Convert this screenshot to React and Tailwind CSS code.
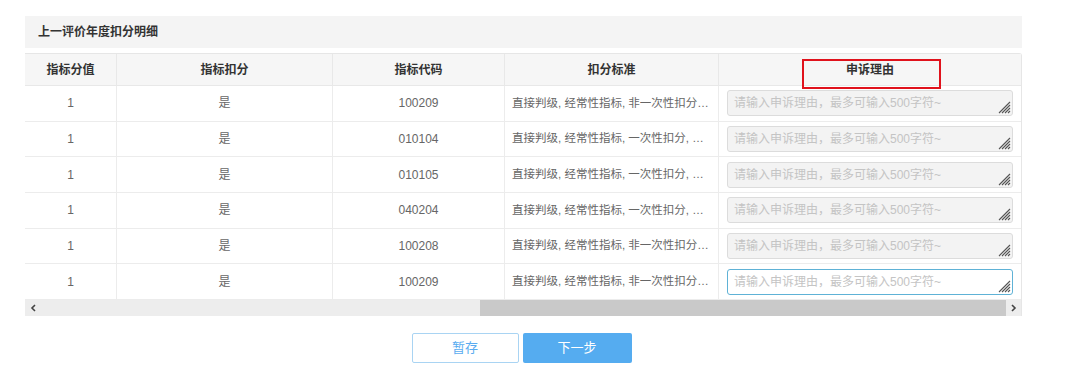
const rows = [
  { score: '1', deduct: '是', code: '100209', rule: '直接判级, 经常性指标, 非一次性扣分, 按次扣分' },
  { score: '1', deduct: '是', code: '010104', rule: '直接判级, 经常性指标, 一次性扣分, 按次扣分' },
  { score: '1', deduct: '是', code: '010105', rule: '直接判级, 经常性指标, 一次性扣分, 按次扣分' },
  { score: '1', deduct: '是', code: '040204', rule: '直接判级, 经常性指标, 一次性扣分, 按次扣分' },
  { score: '1', deduct: '是', code: '100208', rule: '直接判级, 经常性指标, 非一次性扣分, 按次扣分' },
  { score: '1', deduct: '是', code: '100209', rule: '直接判级, 经常性指标, 非一次性扣分, 按次扣分' },
];

const font = { fontFamily: '"Liberation Sans", "Noto Sans CJK SC", sans-serif' };

// 文本框右下角的拖拽纹理
const Grip = () => (
  <svg className="absolute right-[2px] bottom-[2px]" width="13" height="13" viewBox="0 0 13 13">
    <path d="M12 1 L1 12 M12 4 L4 12 M12 7 L7 12 M12 10 L10 12" stroke="#555" strokeWidth="1.1" />
  </svg>
);

export default function App() {
  return (
    <div className="w-[1080px] h-[377px] bg-white pt-4 pl-[25px] text-xs" style={font}>
      <div className="w-[997px]">
        {/* 标题 */}
        <div className="h-8 bg-[#f4f4f4] flex items-center pl-[13px] font-bold text-[#333]">
          上一评价年度扣分明细
        </div>

        {/* 表格 */}
        <div className="mt-[5px] border-t border-r border-[#e6e6e6] rounded-tr-[3px] w-[997px]">
          <div className="flex h-8 bg-[#f6f6f6] border-b border-[#e8e8e8] font-bold text-[#333]">
            <div className="w-[92px] flex items-center justify-center border-r border-[#e8e8e8]">指标分值</div>
            <div className="w-[216px] flex items-center justify-center border-r border-[#e8e8e8]">指标扣分</div>
            <div className="w-[172px] flex items-center justify-center border-r border-[#e8e8e8]">指标代码</div>
            <div className="w-[214px] flex items-center justify-center border-r border-[#e8e8e8]">扣分标准</div>
            <div className="flex-1 flex items-center justify-center relative">
              申诉理由
              <div className="absolute left-[83px] top-[5px] w-[139px] h-[30px] border-2 border-[#e0121c]" />
            </div>
          </div>

          {rows.map((r, i) => (
            <div key={i} className="flex h-[35.7px] border-b border-[#ececec] text-[#666]">
              <div className="w-[92px] flex items-center justify-center border-r border-[#ececec]">{r.score}</div>
              <div className="w-[216px] flex items-center justify-center border-r border-[#ececec]">{r.deduct}</div>
              <div className="w-[172px] flex items-center justify-center border-r border-[#ececec]">{r.code}</div>
              <div className="w-[214px] flex items-center border-r border-[#ececec] pl-[7px] pr-[8px] text-[11.5px]">
                <span className="truncate">{r.rule}</span>
              </div>
              <div className="flex-1 flex items-center pl-[8px] pr-[8px]">
                <div className="relative">
                  <textarea
                    autoFocus={i === rows.length - 1}
                    placeholder="请输入申诉理由，最多可输入500字符~"
                    className={
                      i === rows.length - 1
                        ? 'block resize-none w-[286px] h-[26px] rounded-[3px] border border-[#5fb2d6] bg-white px-[6px] py-[3px] text-xs leading-[18px] outline-none placeholder:text-[#c4c4c4]'
                        : 'block resize-none w-[286px] h-[26px] rounded-[3px] border border-[#dcdcdc] bg-[#f3f3f3] px-[6px] py-[3px] text-xs leading-[18px] outline-none placeholder:text-[#c4c4c4]'
                    }
                    style={font}
                  />
                  <Grip />
                </div>
              </div>
            </div>
          ))}

          {/* 滚动条 */}
          <div className="flex h-4 bg-[#ededed] items-center">
            <div className="w-[16px] h-full flex items-center justify-center">
              <svg width="6" height="8" viewBox="0 0 6 8"><path d="M5 1 L2 4 L5 7" stroke="#444" strokeWidth="1.6" fill="none" /></svg>
            </div>
            <div className="w-[439px]" />
            <div className="w-[526px] h-full bg-[#c9c9c9]" />
            <div className="flex-1 h-full flex items-center justify-center">
              <svg width="6" height="8" viewBox="0 0 6 8"><path d="M1 1 L4 4 L1 7" stroke="#444" strokeWidth="1.6" fill="none" /></svg>
            </div>
          </div>
        </div>

        {/* 按钮 */}
        <div className="flex justify-center gap-[4px] mt-[17px] pr-[4px]">
          <button className="w-[107px] h-[30px] rounded-[2px] border border-[#a9d4f3] bg-white text-[13px] text-[#5aacf0]" style={font}>
            暂存
          </button>
          <button className="w-[109px] h-[30px] rounded-[2px] bg-[#55acf0] text-[13px] text-white" style={font}>
            下一步
          </button>
        </div>
      </div>
    </div>
  );
}
